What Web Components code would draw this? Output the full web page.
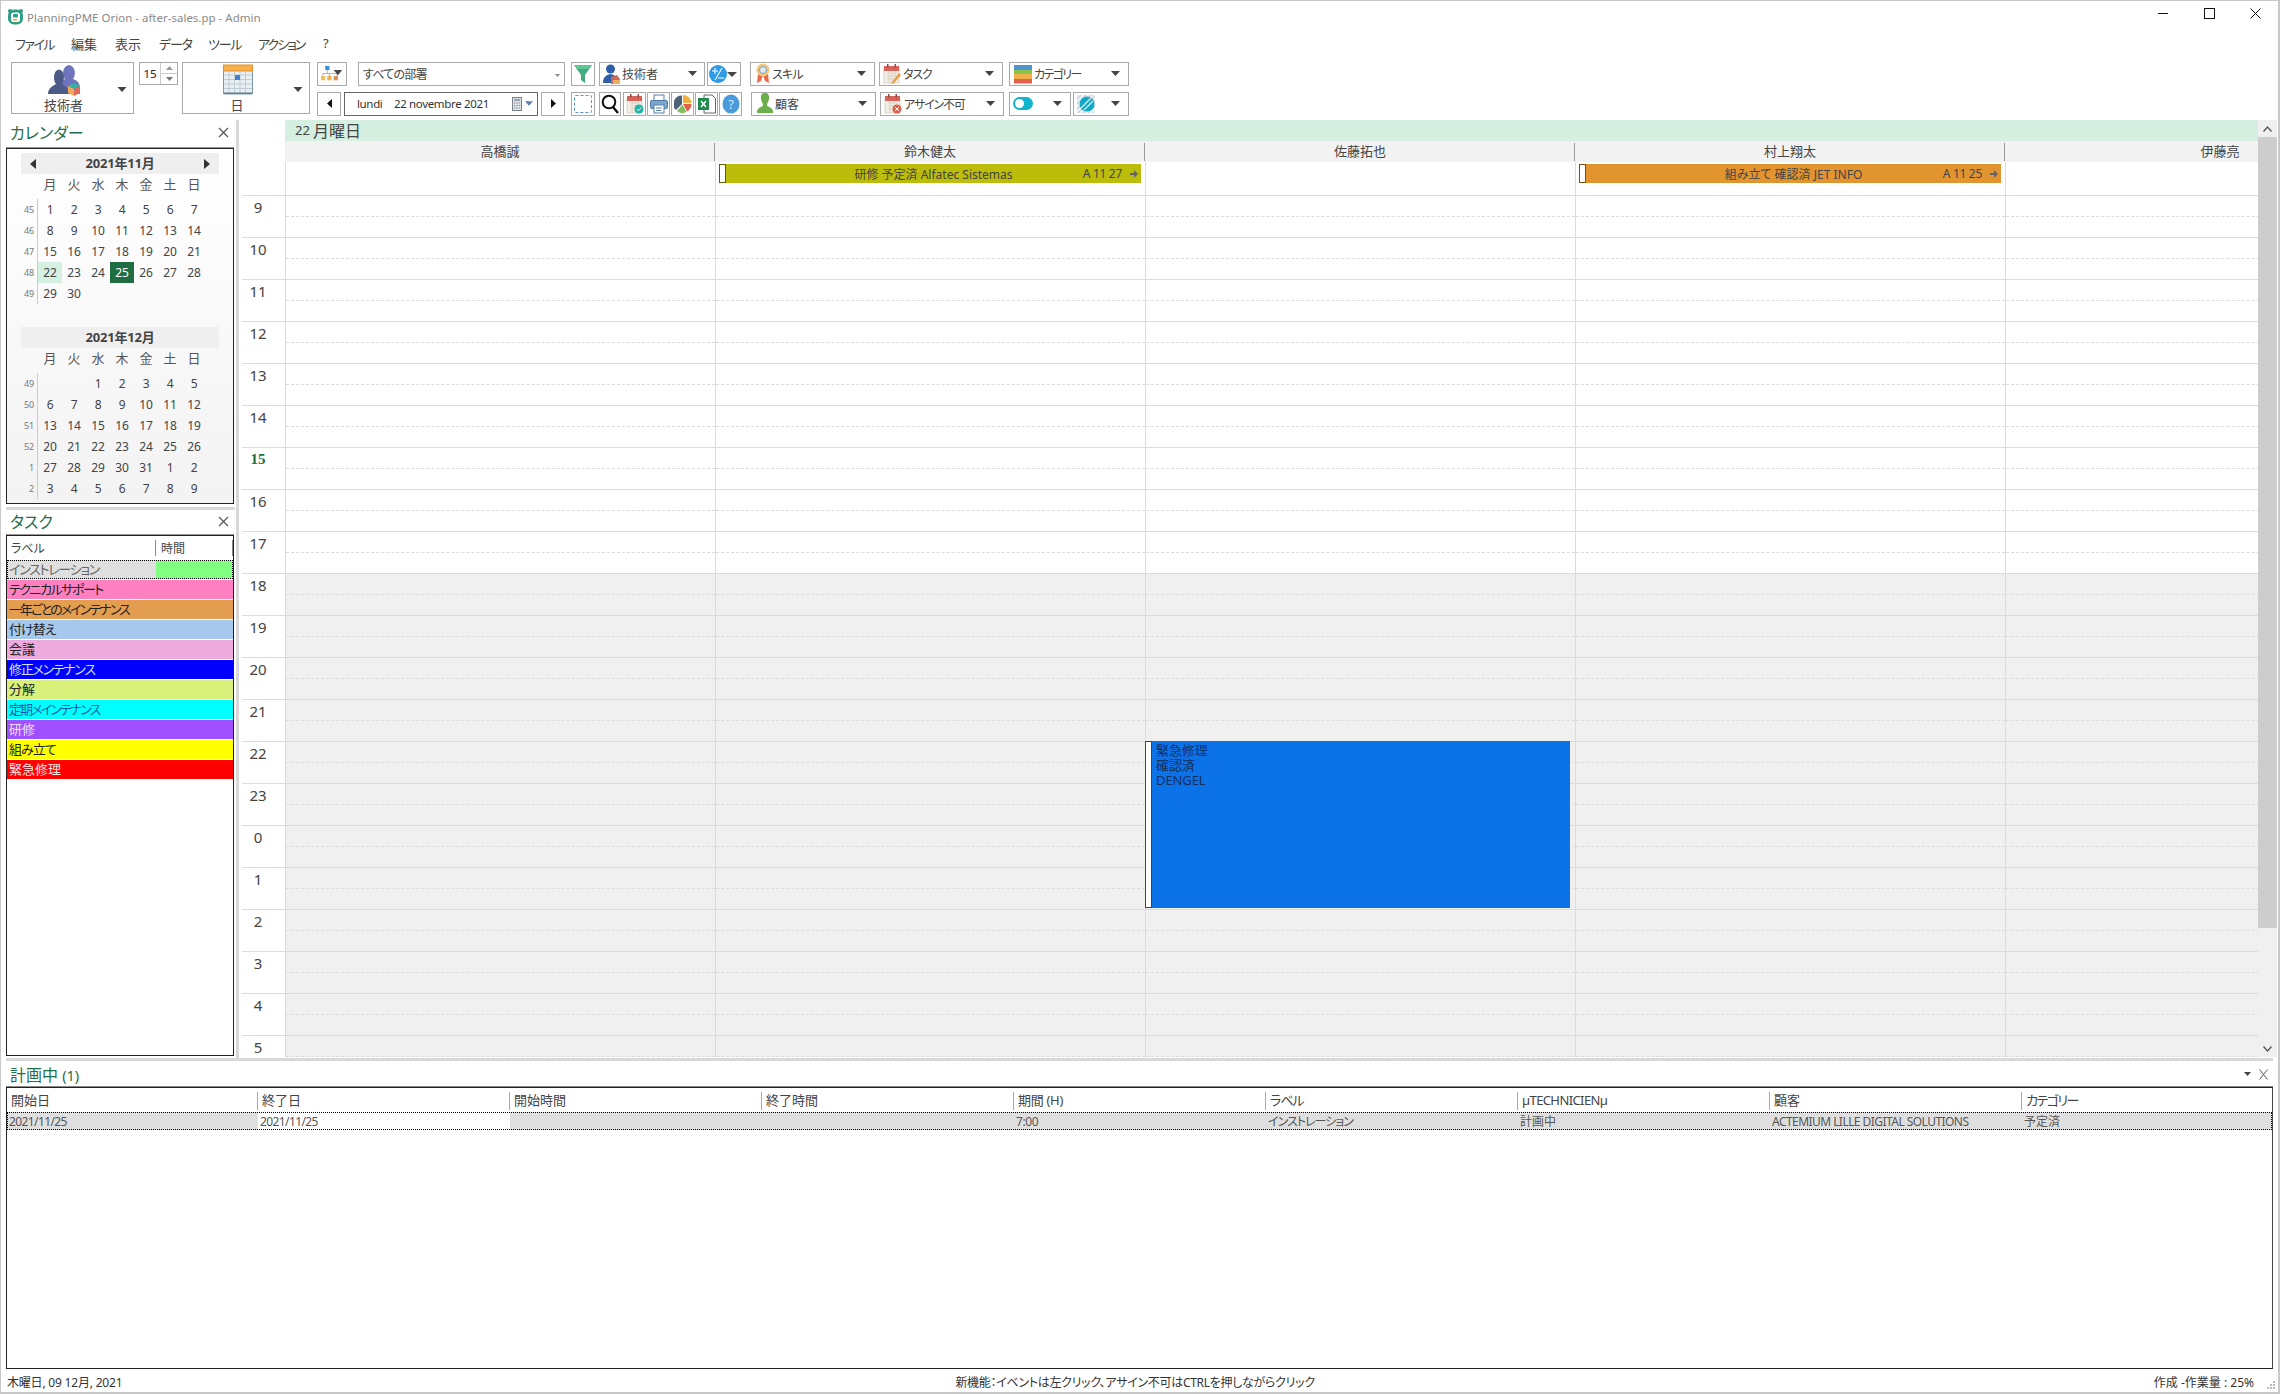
<!DOCTYPE html>
<html lang="ja">
<head>
<meta charset="utf-8">
<title>PlanningPME Orion</title>
<style>
html,body{margin:0;padding:0;background:#fff}
body{font-family:"Noto Sans","Noto Sans CJK JP",sans-serif;font-size:12px;color:#444;font-feature-settings:"palt"}
</style>
</head>
<body>
<pp-window>
  <pp-titlebar>PlanningPME Orion - after-sales.pp - Admin</pp-titlebar>
  <pp-menubar></pp-menubar>
  <pp-toolbar></pp-toolbar>
  <pp-main>
    <pp-panel slot="side" heading="カレンダー" style="height:384px">
      <pp-mini-cal></pp-mini-cal>
    </pp-panel>
    <pp-panel slot="side" heading="タスク" divider style="flex:1">
      <pp-task-list></pp-task-list>
    </pp-panel>
    <pp-scheduler slot="sched"></pp-scheduler>
  </pp-main>
  <pp-plan></pp-plan>
  <pp-status></pp-status>
</pp-window>
<script>
const caret=(c='#444',w=9,h=5)=>`<svg width="${w}" height="${h}" viewBox="0 0 9 5" style="flex:none"><path d="M0 0H9L4.5 5Z" fill="${c}"/></svg>`;
const calBase=(extra='')=>`<svg width="18" height="20" viewBox="0 0 18 20"><rect x="1" y="4" width="15" height="15" fill="#f4efe6" stroke="#cfc7b8" stroke-width=".7"/><path d="M4 9h10M4 12h10M4 15h10M6 7v11M9 7v11M12 7v11" stroke="#d8cfbf" stroke-width=".8"/><rect x="1" y="2" width="15" height="5" fill="#d9635a"/><rect x="4" y="0" width="1.5" height="3.5" fill="#8a4a44"/><rect x="11.5" y="0" width="1.5" height="3.5" fill="#8a4a44"/>${extra}</svg>`;
const ICON={
 app:`<svg width="17" height="17" viewBox="0 0 17 17"><circle cx="3" cy="3" r="2" fill="#2f9c86"/><circle cx="14" cy="3" r="2" fill="#2f9c86"/><rect x="1" y="1.5" width="15" height="15" rx="6" fill="#2f9c86"/><rect x="4" y="4.5" width="9" height="9.5" rx="2.5" fill="#fff"/><rect x="6" y="6" width="5" height="3.4" rx="1" fill="#2f9c86"/><rect x="6" y="11" width="4" height="1.6" fill="#f0a63a"/></svg>`,
 people:`<svg width="34" height="32" viewBox="0 0 34 32"><path d="M12 23C12 18 15 16 17 15C14 12 14 2 21 1C28 2 28 12 25 15C28 16 32 18 32 24V30H12Z" fill="#6f75bd"/><path d="M0 30C0 24 5 22 8 20C5 17 5 6 11 5.500C17 6 17 17 14 20C17 22 21 24 21 30Z" fill="#4b5a86"/><path d="M20 22L26 19L32 22L26 25Z" fill="#2fb5a0"/><path d="M20 22L26 25V32L20 29Z" fill="#f2a65a"/><path d="M32 22L26 25V32L32 29Z" fill="#e06a5a"/></svg>`,
 cal:`<svg width="30" height="31" viewBox="0 0 30 31"><rect x=".5" y="2" width="29" height="28" rx="1" fill="#e9eff3" stroke="#7b98ad"/><rect x=".5" y="1" width="29" height="6" fill="#f6b04a" stroke="#e08f2a"/><path d="M1 11H29M1 15.500H29M1 20H29M1 24.500H29M6 8V29M11.500 8V29M17 8V29M22.500 8V29" stroke="#b9c7d0" stroke-width=".9"/><rect x="12" y="11" width="5" height="5" fill="#3f80d2"/><rect x=".5" y="28.500" width="29" height="1.500" fill="#5f8298"/></svg>`,
 org:`<svg width="28" height="20" viewBox="0 0 28 20"><rect x="6" y="1" width="5" height="5" fill="#3b8fd4"/><path d="M8.500 6V10M3 13V10H20V13M11 10V13" stroke="#aaa" fill="none"/><rect x="1" y="13" width="5" height="5" fill="#f0c060"/><rect x="8.500" y="13" width="5" height="5" fill="#f0b050"/><rect x="16" y="13" width="5" height="5" fill="#d99058"/><path d="M16 6H26L21 12Z" fill="#444"/></svg>`,
 funnel:`<svg width="18" height="20" viewBox="0 0 18 20"><path d="M0 1H18L11 11V19L7 16V11Z" fill="#43ab7c"/><path d="M0 1H18L15 5H3Z" fill="#5fc597"/></svg>`,
 tech:`<svg width="17" height="20" viewBox="0 0 17 20"><circle cx="7.500" cy="5" r="4.500" fill="#2f5ea8"/><path d="M0 19C0 13 3 11 7.500 10C12 11 15 13 15 19Z" fill="#2f5ea8"/><path d="M8 13L14 11L17 15L15 20H8Z" fill="#c86a5a"/><path d="M10 16H17V20H10Z" fill="#e8b060"/></svg>`,
 pm:`<svg width="30" height="20" viewBox="0 0 30 20"><circle cx="9" cy="10" r="9" fill="#2f9be6"/><path d="M3 7H9M6 4V10M9 14H15M13 4L6 16" stroke="#fff" stroke-width="1.100" fill="none"/><path d="M18 8H28L23 13Z" fill="#444"/></svg>`,
 ribbon:`<svg width="14" height="21" viewBox="0 0 14 21"><path d="M2 11L1 20L5 18L7 12Z" fill="#e86a4a"/><path d="M12 11L13 20L9 18L7 12Z" fill="#e86a4a"/><circle cx="7" cy="7" r="6.500" fill="#f0c878"/><circle cx="7" cy="7" r="3.500" fill="#dfe8f0" stroke="#7e9cc0"/></svg>`,
 task:calBase(`<path d="M9 18L16 9L18 11L11 19L8 20Z" fill="#e8a040"/>`),
 cat:`<svg width="18" height="20" viewBox="0 0 18 20"><rect y="1" width="18" height="5" fill="#4f94cf"/><rect y="6" width="18" height="4" fill="#8bc34a"/><rect y="10" width="18" height="5" fill="#f0b04a"/><rect y="15" width="18" height="4.500" fill="#e4604e"/></svg>`,
 client:`<svg width="16" height="21" viewBox="0 0 16 21"><path d="M8 0C11.500 0 12.500 3 12 6C11.500 9 10 10 10 12C10 14 15 14 16 18V20H0V18C1 14 6 14 6 12C6 10 4.500 9 4 6C3.500 3 4.500 0 8 0Z" fill="#6cae4a"/></svg>`,
 unav:calBase(`<circle cx="13" cy="15" r="4.500" fill="#e06050"/><path d="M11 13L15 17M15 13L11 17" stroke="#fff"/>`),
 check:calBase(`<circle cx="13" cy="15" r="4.500" fill="#19b5a5"/><path d="M10.800 15L12.500 16.800L15.300 13.500" stroke="#fff" fill="none"/>`),
 toggle:`<svg width="20" height="13" viewBox="0 0 20 13"><rect width="20" height="13" rx="6.500" fill="#10b4cc"/><circle cx="6.500" cy="6.500" r="4.500" fill="#fff"/></svg>`,
 hatch:`<svg width="18" height="18" viewBox="0 0 18 18"><rect width="18" height="18" fill="#e8eef0"/><path d="M0 4L4 0M0 9L9 0M0 14L14 0M1 18L18 1M6 18L18 6M11 18L18 11" stroke="#bcc8cc" stroke-width="1"/><circle cx="10" cy="9" r="7.500" fill="#10a8c8"/><path d="M4 13L14 3M7 15L16 6" stroke="#dff4f8" stroke-width="1.200"/></svg>`,
 dashed:`<svg width="18" height="18" viewBox="0 0 18 18"><rect x=".5" y=".5" width="17" height="17" rx="1" fill="none" stroke="#5a94d0" stroke-dasharray="3 2"/></svg>`,
 zoom:`<svg width="18" height="20" viewBox="0 0 18 20"><circle cx="8" cy="8" r="6.300" fill="none" stroke="#111" stroke-width="2"/><path d="M12 13L17 19" stroke="#111" stroke-width="2.400"/></svg>`,
 print:`<svg width="18" height="20" viewBox="0 0 18 20"><rect x="4" y="1" width="10" height="6" fill="#fff" stroke="#5a7fa8"/><rect x=".5" y="6.500" width="17" height="8" rx="1.500" fill="#7ba7cf" stroke="#4e7aa5"/><rect x="4" y="11" width="10" height="8" fill="#fff" stroke="#5a7fa8"/><path d="M6 14H12M6 16.500H11" stroke="#5a7fa8"/></svg>`,
 pie:`<svg width="18" height="20" viewBox="0 0 18 20"><path d="M8 10L8 1.500A8.500 8.500 0 0 0 2 16Z" fill="#4f5f78"/><path d="M9 9V1A8.500 8.500 0 0 1 17.500 9Z" fill="#f0b040"/><path d="M9 10H17.500A8.500 8.500 0 0 1 13 17.500Z" fill="#e0604e"/><path d="M8.500 10.500L12.500 18A8.500 8.500 0 0 1 3 17Z" fill="#7fbf5a"/></svg>`,
 excel:`<svg width="18" height="20" viewBox="0 0 18 20"><path d="M6 1H14L17.500 4.500V19H6Z" fill="#fff" stroke="#666"/><rect x="0" y="4" width="11" height="12" fill="#1e8a4c"/><path d="M3 7L8 13M8 7L3 13" stroke="#fff" stroke-width="1.500"/></svg>`,
 help:`<svg width="18" height="20" viewBox="0 0 18 20"><ellipse cx="9" cy="10" rx="8.500" ry="9.500" fill="#4a9bdc"/><text x="9" y="15" text-anchor="middle" font-family="Noto Sans,sans-serif" font-size="13" fill="#cfe6f7">?</text></svg>`,
 calc:`<svg width="10" height="14" viewBox="0 0 10 14"><rect x=".5" y=".5" width="9" height="13" fill="#dfe3e8" stroke="#77808c"/><rect x="2" y="2" width="6" height="2" fill="#9aa3ad"/><path d="M2 6H8M2 8.500H8M2 11H8" stroke="#8a929c" stroke-dasharray="1.500 .8"/></svg>`
};
const close9=`<svg width="11" height="11" viewBox="0 0 11 11"><path d="M1 1L10 10M10 1L1 10" stroke="#555" stroke-width="1.200"/></svg>`;
function def(name,css,html,init){
  customElements.define(name,class extends HTMLElement{
    connectedCallback(){
      if(this.shadowRoot)return;
      const r=this.attachShadow({mode:'open'});
      r.innerHTML=`<style>${css}</style>`+(typeof html==='function'?html(this):html);
      if(init)init(this,r);
    }
  });
}
def('pp-window',`:host{display:flex;flex-direction:column;width:2280px;height:1394px;box-sizing:border-box;border:solid #c8c8c8;border-width:1px 2px 2px 1px;overflow:hidden;background:#fff}`,`<slot></slot>`);
def('pp-titlebar',`:host{display:flex;align-items:center;height:28px;flex:none;color:#8a8a8a;font-size:11.500px}
 .ico{margin:2px 3px 0 6px;display:flex}.t{flex:1;padding-top:4px}.w{display:flex;margin-top:-3px}
 .b{width:46px;display:flex;justify-content:center}`,
 `<span class="ico">${ICON.app}</span><span class="t"><slot></slot></span><span class="w">
 <span class="b"><svg width="10" height="10"><path d="M0 5.500H10" stroke="#111"/></svg></span>
 <span class="b"><svg width="11" height="11"><rect x=".5" y=".5" width="10" height="10" fill="none" stroke="#111"/></svg></span>
 <span class="b"><svg width="11" height="11"><path d="M.5 .5L10.500 10.500M10.500 .5L.5 10.500" stroke="#111"/></svg></span></span>`);
def('pp-menubar',`:host{display:flex;height:28px;flex:none;font-size:13px;color:#444;align-items:center;padding-left:14px}span{flex:none}`,
 ()=>[['ファイル',56,-1.5],['編集',44,0],['表示',44,0],['データ',49,-1.2],['ツール',50,-1.2],['アクション',65,-2],['?',10,0]].map(([t,w,l])=>`<span style="width:${w}px;letter-spacing:${l}px">${t}</span>`).join(''));
def('pp-tool',`:host{display:flex;align-items:center;box-sizing:border-box;height:24px;border:1px solid #a9a9a9;background:#fff;flex:none;font-size:12px;color:#444;position:relative}
 ::slotted(*){flex:none}
 .i{display:flex;flex:none;margin-left:var(--il,3px)}.l{flex:1;padding-left:2px;white-space:nowrap;letter-spacing:var(--ls,0)}.c{display:flex;margin-right:var(--cr,8px)}`,
 h=>`<span class="i">${ICON[h.getAttribute('icon')]||''}</span><span class="l"><slot></slot></span>${h.hasAttribute('caret')?`<span class="c">${caret()}</span>`:''}`);
def('pp-big',`:host{display:block;box-sizing:border-box;height:52px;border:1px solid #a9a9a9;flex:none;position:relative;font-size:13px;color:#444;text-align:center}
 .i{position:absolute;left:0;right:16px;top:1px;display:flex;justify-content:center}
 .l{position:absolute;left:0;right:18px;bottom:-1px}.c{position:absolute;right:6px;top:24px;display:flex}`,
 h=>`<span class="i">${ICON[h.getAttribute('icon')]}</span><span class="l"><slot></slot></span><span class="c">${caret('#444',10,5)}</span>`);
def('pp-toolbar',`:host{display:flex;flex:none;height:53px;padding:5px 0 0 10px;margin-bottom:5px;align-items:flex-start;font-size:12px}
 .sp{display:flex;width:39px;height:23px;margin:0 4px 0 5px;box-sizing:border-box;border:1px solid #a9a9a9;flex:none}
 .sp b{font-weight:400;flex:1;text-align:center;line-height:21px;color:#222;font-size:11.500px}
 .sp div{width:16px;border-left:1px solid #ccc;display:flex;flex-direction:column}
 .sp i{flex:1;display:flex;align-items:center;justify-content:center}.sp i+i{border-top:1px solid #ccc}
 .rows{margin-left:7px;display:flex;flex-direction:column;gap:6.500px}
 .row{display:flex;height:23.500px}
 .row>*{height:23.500px}
 .date{display:flex;align-items:center;box-sizing:border-box;width:194px;border:1px solid #666;margin:0 3px;font-size:11.500px;letter-spacing:-.35px;color:#333;flex:none;padding-left:12px}
 .date span{white-space:nowrap;flex:none}
 .btn{display:flex;align-items:center;justify-content:center;box-sizing:border-box;border:1px solid #a9a9a9;flex:none}
 `,()=>`
 <pp-big icon="people" style="width:123px">技術者</pp-big>
 <div class="sp"><b>15</b><div><i><svg width="7" height="4"><path d="M0 4L3.500 0L7 4Z" fill="#999"/></svg></i><i><svg width="7" height="4"><path d="M0 0L3.500 4L7 0Z" fill="#777"/></svg></i></div></div>
 <pp-big icon="cal" style="width:128px">日</pp-big>
 <div class="rows">
  <div class="row">
   <div class="btn" style="width:30px">${ICON.org.replace('width="28" height="20"','width="24" height="17"')}</div>
   <div class="btn" style="width:207px;margin-left:11px;justify-content:space-between;padding:0 4px;font-size:12px;"><span style="letter-spacing:-.8px">すべての部署</span><span style="margin-top:-2px">${caret('#888',5,3)}</span></div>
   <div class="btn" style="width:24px;margin-left:6px">${ICON.funnel}</div>
   <pp-tool icon="tech" caret style="width:106px;margin-left:4px;--cr:7px">技術者</pp-tool>
   <div class="btn" style="width:34px;margin-left:2px">${ICON.pm}</div>
   <pp-tool icon="ribbon" caret style="width:125px;margin-left:9px;--il:5px;--ls:-.8px">スキル</pp-tool>
   <pp-tool icon="task" caret style="width:124px;margin-left:4px;--il:3px;--ls:-1.2px">タスク</pp-tool>
   <pp-tool icon="cat" caret style="width:120px;margin-left:6px;--il:4px;--ls:-1.6px">カテゴリー</pp-tool>
  </div>
  <div class="row">
   <div class="btn" style="width:24px"><svg width="5" height="9"><path d="M5 0V9L0 4.500Z" fill="#111"/></svg></div>
   <div class="date"><span style="width:37px">lundi</span><span style="width:70px">22 novembre</span><span style="width:48px">2021</span><span style="display:flex;align-items:center;gap:3px;letter-spacing:0">${ICON.calc}${caret('#5a7fa8',8,5)}</span></div>
   <div class="btn" style="width:24px"><svg width="5" height="9"><path d="M0 0V9L5 4.500Z" fill="#111"/></svg></div>
   <div class="btn" style="width:24px;margin-left:6px">${ICON.dashed}</div>
   <div class="btn" style="width:22px;margin-left:4px">${ICON.zoom}</div>
   <div class="btn" style="width:23px;margin-left:2px">${ICON.check}</div>
   <div class="btn" style="width:23px;margin-left:1px">${ICON.print}</div>
   <div class="btn" style="width:23px;margin-left:1px">${ICON.pie}</div>
   <div class="btn" style="width:23px;margin-left:1px">${ICON.excel}</div>
   <div class="btn" style="width:23px;margin-left:1px">${ICON.help}</div>
   <pp-tool icon="client" caret style="width:125px;margin-left:9px;--il:5px">顧客</pp-tool>
   <pp-tool icon="unav" caret style="width:124px;margin-left:4px;--ls:-1.2px">アサイン不可</pp-tool>
   <pp-tool icon="toggle" caret style="width:62px;margin-left:5px;--il:3px"></pp-tool>
   <pp-tool icon="hatch" caret style="width:56px;margin-left:2px;--il:3px"></pp-tool>
  </div>
 </div>`);
def('pp-main',`:host{display:flex;flex:none;height:938px}
 .side{width:229px;margin:0 1px 0 5px;display:flex;flex-direction:column;flex:none}
 .split{width:3px;background:#d8d8d8;flex:none}`,
 `<div class="side"><slot name="side"></slot></div><div class="split"></div><slot name="sched"></slot>`);
def('pp-panel',`:host{display:flex;flex-direction:column;flex:none;min-height:0}
 :host([divider]){margin-top:3px;margin-bottom:2px}
 :host([divider]) .t{height:22px;border-top:3px solid #d8d8d8;padding-bottom:2px;padding-right:6px}
 .t{display:flex;align-items:center;justify-content:space-between;height:24px;padding:0 6px 3px 4px;color:#1f6e4a;font-size:16px;flex:none}
 .x{display:flex}
 .box{flex:1;min-height:0;border:1px solid #222;box-shadow:0 -1px 0 #999;margin-right:1px;margin-top:1px;background:#fff;display:flex;flex-direction:column;overflow:hidden}`,
 h=>`<div class="t"><span>${h.getAttribute('heading')}</span><span class="x">${close9}</span></div><div class="box"><slot></slot></div>`);
const NOV=[[45,1,2,3,4,5,6,7],[46,8,9,10,11,12,13,14],[47,15,16,17,18,19,20,21],[48,22,23,24,25,26,27,28],[49,29,30,'','','','','']];
const DEC=[[49,'','',1,2,3,4,5],[50,6,7,8,9,10,11,12],[51,13,14,15,16,17,18,19],[52,20,21,22,23,24,25,26],[1,27,28,29,30,31,1,2],[2,3,4,5,6,7,8,9]];
const DOW=['月','火','水','木','金','土','日'];
function month(title,weeks,nav,mark){
 return `<div class="mh">${nav?'<svg class="pv" width="6" height="10"><path d="M6 0V10L0 5Z" fill="#333"/></svg>':''}<b>${title}</b>${nav?'<svg class="nx" width="6" height="10"><path d="M0 0V10L6 5Z" fill="#333"/></svg>':''}</div>
 <div class="g head"><span></span>${DOW.map(d=>`<span>${d}</span>`).join('')}</div>
 <div class="g">${weeks.map(w=>w.map((v,i)=>i==0?`<span class="wk">${v}</span>`:`<span class="${mark&&v===22?'sel':mark&&v===25?'today':''}">${v}</span>`).join('')).join('')}</div>`;
}
def('pp-mini-cal',`:host{display:block;flex:1;padding:4px 14px 0;background:linear-gradient(#fff,#f3f3f3);color:#444;font-size:12px;letter-spacing:-.2px}
 .mh{height:18px;padding-bottom:3px;background:#efefef;display:flex;align-items:center;justify-content:center;position:relative;font-size:13px}
 .mh b{font-weight:700;color:#444}
 .pv{position:absolute;left:9px;top:5.500px}.nx{position:absolute;right:9px;top:5.500px}
 .g{display:grid;grid-template-columns:17px repeat(7,24px);grid-auto-rows:21px;text-align:center;line-height:21px}
 .g.head{grid-auto-rows:25px;line-height:20px;font-size:13px;color:#555}
 .wk{font-size:9px;color:#777;border-right:1px solid #ccc;text-align:right;padding-right:3px}
 .sel{background:#d5efe0}.today{background:#1e6e42;color:#fff}
 .gap{height:23px}`,
 ()=>month('2021年11月',NOV,true,true)+'<div class="gap"></div>'+month('2021年12月',DEC,false,false));
def('pp-task-list',`:host{display:block;font-size:13px}
 .h{display:grid;grid-template-columns:149px 1fr;height:22px;align-items:center;color:#444;margin:1px 0;font-size:12px}
 .h span{padding-left:4px;height:16px;line-height:18px;border-right:1px solid #888}
 .r{height:19px;line-height:19px;margin:0 0 1px 0;padding-left:2px;white-space:nowrap;display:flex;justify-content:space-between}
 .r.a{outline:1px dotted #000;outline-offset:-1px;padding:0 2px;color:#666;padding-right:1px}
 .sw{width:76px;background:#80ff80;margin:1px 0}`,
 ()=>`<div class="h"><span>ラベル</span><span style="padding-left:5px">時間</span></div>
 <div class="r a" style="background:#dfdfdf"><span style="letter-spacing:-1.300px">インストレーション</span><span class="sw"></span></div>`+
 [['テクニカルサポート','#ff80c0','#222',-1.5],['一年ごとのメインテナンス','#e39d4f','#222',-1.9],['付け替え','#a6c8ec','#222',-1],['会議','#edaadc','#222',0],['修正メンテナンス','#0000ff','#cfe0ff',-1.3],['分解','#d8f07a','#222',0],['定期メインテナンス','#00ffff','#0a5ca8',-1.9],['研修','#a050ff','#f0e0ff',0],['組み立て','#ffff00','#222',-1],['緊急修理','#ff0000','#ffe0e0',0]]
 .map(([t,b,c,l])=>`<div class="r" style="background:${b};color:${c};letter-spacing:${l}px">${t}</div>`).join(''));
def('pp-allday-event',`:host{display:grid;grid-template-columns:7px 1fr auto 1fr;height:19px;align-items:center;background:var(--c);font-size:12px;color:#444;white-space:nowrap}
 .st{height:100%;box-sizing:border-box;background:#fff;border:1px solid var(--d)}
 .t{text-align:center}.m{display:flex;justify-content:flex-end;align-items:center;gap:8px;padding-right:3px;letter-spacing:-.3px}`,
 h=>`<span class="st"></span><span></span><span class="t"><slot></slot></span><span class="m">${h.getAttribute('meta')}<svg width="8" height="8" viewBox="0 0 8 8"><path d="M0 3H4V0L8 4L4 8V5H0Z" fill="#666"/></svg></span>`);
def('pp-block-event',`:host{position:absolute;box-sizing:border-box;display:flex;background:#0b72e8;left:var(--x);top:var(--y);width:var(--w);height:var(--h);color:#14305e;font-size:13px;line-height:15px}
 .st{width:7px;box-sizing:border-box;background:#fff;border:1px solid #1a4a80;flex:none}
 .t{padding:2px 0 0 4px;letter-spacing:-.1px}`,
 `<span class="st"></span><span class="t"><slot></slot></span>`);
const COLS=['高橋誠','鈴木健太','佐藤拓也','村上翔太','伊藤亮'];
const HOURS=[9,10,11,12,13,14,15,16,17,18,19,20,21,22,23,0,1,2,3,4,5];
def('pp-scheduler',`:host{display:flex;flex:1;min-width:0;height:937px;position:relative;overflow:hidden}
 .m{width:2019px;flex:none;display:flex;flex-direction:column;overflow:hidden;position:relative}
 .d{margin-left:46px;height:20px;padding-bottom:1px;flex:none;background:#d5efe0;font-size:13px;color:#444;display:flex;align-items:center;padding-left:10px;gap:3px;white-space:nowrap}
 .d b{font-weight:400;font-size:16px}
 .rh,.ad,.hr{display:grid;grid-template-columns:46px repeat(5,430px);flex:none}
 .rh{height:21px;background:#f2f2f2}
 .rh span{text-align:center;line-height:21px;font-size:13px;color:#444;position:relative;white-space:nowrap}
 .rh span:not(:first-child):not(:last-child)::after{content:"";position:absolute;right:0;top:2px;bottom:1px;width:1px;background:#999}
 .rh span:first-child{background:#fff}
 .ad{height:33px}
 .ad>div:not(:first-child){border-left:1px solid #ddd;padding:2px 4px 0 3px;box-sizing:border-box}
 .hr{height:42px}
 .hr>div{border-top:1px solid #dcdcdc;box-sizing:border-box}
 .hr>.l{margin-left:3px;font-size:15px;color:#444;text-align:center;padding-right:11px;line-height:22px}
 .hr>.l.now{color:#1e6e42;font-weight:700;font-family:"Liberation Serif",serif}
 .hr>.c{border-left:1px solid #dcdcdc}
 .hr>.c::before{content:"";display:block;height:20px;border-bottom:1px dashed #dcdcdc}
 .hr.off>.c{background:#f0f0f0}
 .sb{width:19px;flex:none;background:#f0f0f0;display:flex;flex-direction:column}
 .sb i{height:17px;flex:none;display:flex;align-items:center;justify-content:center}
 .sb u{height:791px;background:#cdcdcd;flex:none}.sb s{flex:1}`,
 ()=>`<div class="m"><div class="d">22<b>月曜日</b></div>
 <div class="rh"><span></span>${COLS.map(c=>`<span>${c}</span>`).join('')}</div>
 <div class="ad"><div></div><div></div><div><pp-allday-event meta="A 11 27" style="--c:#bcbc0a;--d:#5e5e05">研修 予定済 Alfatec Sistemas</pp-allday-event></div><div></div><div><pp-allday-event meta="A 11 25" style="--c:#e2952f;--d:#7a5018">組み立て 確認済 JET INFO</pp-allday-event></div><div></div></div>
 ${HOURS.map((h,i)=>`<div class="hr${i>=9?' off':''}"><div class="l${h==15?' now':''}">${h}</div>${COLS.map(()=>'<div class="c"></div>').join('')}</div>`).join('')}
 <pp-block-event style="--x:906px;--y:621px;--w:425px;--h:167px">緊急修理<br>確認済<br>DENGEL</pp-block-event>
 </div>
 <div class="sb"><i><svg width="9" height="6"><path d="M.5 5.500L4.500 1L8.500 5.500" fill="none" stroke="#555" stroke-width="1.300"/></svg></i><u></u><s></s><i><svg width="9" height="6"><path d="M.5 .5L4.500 5L8.500 .5" fill="none" stroke="#555" stroke-width="1.300"/></svg></i></div>`);
const PH=[['開始日',0],['終了日',0],['開始時間',0],['終了時間',0],['期間 (H)',-.3],['ラベル',-1],['µTECHNICIENµ',-.6],['顧客',0],['カテゴリー',-1.5]];
const PR=[['2021/11/25',-.6],['2021/11/25',-.6],['',0],['',0],['7:00',-.4],['インストレーション',-1],['計画中',0],['ACTEMIUM LILLE DIGITAL SOLUTIONS',-.55],['予定済',0]];
def('pp-plan',`:host{display:flex;flex-direction:column;flex:none;height:311px;margin:0 5px;font-size:12px;color:#555}
 .bar{border-top:3px solid #d8d8d8;height:26px;display:flex;align-items:center;justify-content:space-between;padding:0 5px 0 4px;color:#1f6e4a;font-size:16px;flex:none}
 .bar small{font-size:14.500px}.ct{display:flex;gap:8px;align-items:center}
 .box{flex:1;border:1px solid #222;box-shadow:0 -1px 0 #888;overflow:hidden;border-right-color:#444;padding-top:1px}
 .g{display:grid;grid-template-columns:251px repeat(7,252px) 1fr}
 .ph{height:23px;font-size:13px}.ph span{padding-left:4px;border-right:1px solid #aaa;height:18px;align-self:center;line-height:17px;color:#444;white-space:nowrap}
 .ph span:last-child{border-right:0}
 .pr{height:18px;outline:1px dotted #000;outline-offset:-1px;background:#dfdfdf;line-height:20px}
 .pr span{padding-left:2px;white-space:nowrap;height:18px;overflow:hidden}.pr span:nth-child(2){background:#fff}`,
 ()=>`<div class="bar"><span>計画中 <small>(1)</small></span><span class="ct">${caret('#444',7,4)}<svg width="9" height="11"><path d="M.5 .5L8.500 10.500M8.500 .5L.5 10.500" stroke="#555"/></svg></span></div>
 <div class="box"><div class="g ph">${PH.map(([t,l])=>`<span style="letter-spacing:${l}px">${t}</span>`).join('')}</div><div class="g pr">${PR.map(([t,l])=>`<span style="letter-spacing:${l}px">${t}</span>`).join('')}</div></div>`);
def('pp-status',`:host{display:flex;flex:1;justify-content:space-between;align-items:center;padding:2px 24px 0 6px;font-size:12px;color:#333;position:relative}
 .g{position:absolute;right:3px;bottom:3px;display:flex}`,
 `<span style="letter-spacing:-.2px">木曜日, 09 12月, 2021</span><span style="letter-spacing:-.3px;margin-right:6px">新機能：イベントは左クリック、アサイン不可はCTRLを押しながらクリック</span><span>作成 -作業量 : 25%</span><svg class="g" width="9" height="9"><path d="M7 1h2v2h-2zM4 4h2v2h-2zM7 4h2v2h-2zM1 7h2v2h-2zM4 7h2v2h-2zM7 7h2v2h-2z" fill="#bbb"/></svg>`);
</script>
</body>
</html>
